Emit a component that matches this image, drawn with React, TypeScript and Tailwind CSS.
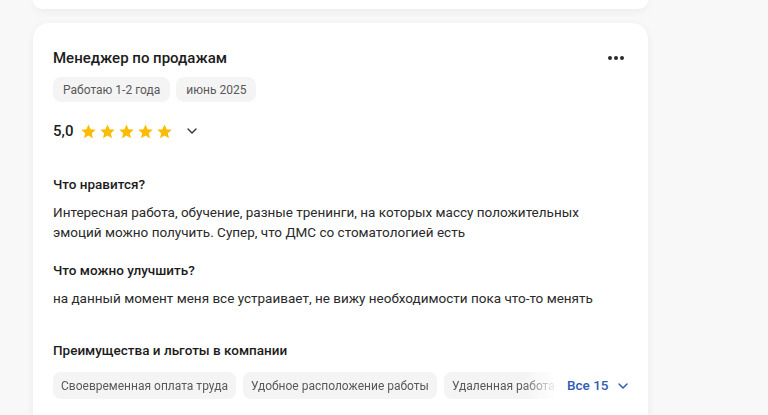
import { ChevronDown } from "lucide-react";

function Star() {
  return (
    <svg width="17" height="17" viewBox="0 0 24 24" className="shrink-0">
      <path
        d="M12 2.2l2.95 6.6 7.2.7-5.45 4.85 1.6 7.05L12 17.7l-6.3 3.7 1.6-7.05L1.85 9.5l7.2-.7z"
        fill="#fcbc06"
      />
    </svg>
  );
}

function Tag({ children }: { children: React.ReactNode }) {
  return (
    <span className="flex h-[25px] items-center rounded-lg bg-[#f4f4f5] px-2.5 text-[12px] text-[#595959]">
      {children}
    </span>
  );
}

function Chip({ children }: { children: React.ReactNode }) {
  return (
    <span className="flex h-[27px] shrink-0 items-center whitespace-nowrap rounded-lg bg-[#f4f4f5] px-2 text-[12px] text-[#595959]">
      {children}
    </span>
  );
}

export default function App() {
  const benefits = [
    "Своевременная оплата труда",
    "Удобное расположение работы",
    "Удаленная работа",
  ];

  return (
    <div
      className="flex h-[415px] flex-col gap-[14px] overflow-hidden bg-[#f8f8f8] pl-[33px]"
      style={{ fontFamily: "Roboto, 'Noto Sans', sans-serif" }}
    >
      <div className="h-[9px] w-[615px] shrink-0 rounded-b-2xl bg-white shadow-[0_2px_8px_rgba(0,0,0,0.06)]" />

      <div className="w-[615px] shrink-0 rounded-t-2xl bg-white px-5 pt-6 pb-8 shadow-[0_2px_8px_rgba(0,0,0,0.06)]">
        <div className="flex items-center justify-between">
          <h2 className="text-[15px] leading-[22px] font-medium text-[#1c1c1c]">
            Менеджер по продажам
          </h2>
          <div className="mr-[4px] flex gap-[2px]">
            <span className="h-[4px] w-[4px] rounded-full bg-[#2b2b2b]" />
            <span className="h-[4px] w-[4px] rounded-full bg-[#2b2b2b]" />
            <span className="h-[4px] w-[4px] rounded-full bg-[#2b2b2b]" />
          </div>
        </div>

        <div className="mt-2 flex gap-1.5">
          <Tag>Работаю 1-2 года</Tag>
          <Tag>июнь 2025</Tag>
        </div>

        <div className="mt-[17px] flex h-6 items-center">
          <span className="text-[15px] font-medium text-[#1c1c1c]">5,0</span>
          <div className="ml-[7px] flex gap-[2px]">
            <Star />
            <Star />
            <Star />
            <Star />
            <Star />
          </div>
          <ChevronDown className="ml-[11px] h-4 w-4 text-[#333]" strokeWidth={2} />
        </div>

        <h3 className="mt-[31px] text-[13.5px] leading-5 font-medium text-[#1c1c1c]">
          Что нравится?
        </h3>
        <p className="mt-2 w-[545px] text-[13.5px] leading-5 text-[#2a2a2a]">
          Интересная работа, обучение, разные тренинги, на которых массу положительных
          эмоций можно получить. Супер, что ДМС со стоматологией есть
        </p>

        <h3 className="mt-[18px] text-[13.5px] leading-5 font-medium text-[#1c1c1c]">
          Что можно улучшить?
        </h3>
        <p className="mt-2 text-[13.5px] leading-5 text-[#2a2a2a]">
          на данный момент меня все устраивает, не вижу необходимости пока что-то менять
        </p>

        <h3 className="mt-[32px] text-[13.5px] leading-5 font-medium text-[#1c1c1c]">
          Преимущества и льготы в компании
        </h3>
        <div className="mt-3 flex items-center">
          <div
            className="flex w-[505px] shrink-0 gap-[7px] overflow-hidden"
            style={{
              maskImage: "linear-gradient(to right, black 470px, transparent 505px)",
              WebkitMaskImage: "linear-gradient(to right, black 470px, transparent 505px)",
            }}
          >
            {benefits.map((b) => (
              <Chip key={b}>{b}</Chip>
            ))}
          </div>
          <button className="ml-[9px] flex shrink-0 items-center gap-1.5 whitespace-nowrap text-[13.5px] font-medium text-[#2f5bb7]">
            Все 15
            <ChevronDown className="h-4 w-4" strokeWidth={2.2} />
          </button>
        </div>
      </div>
    </div>
  );
}
